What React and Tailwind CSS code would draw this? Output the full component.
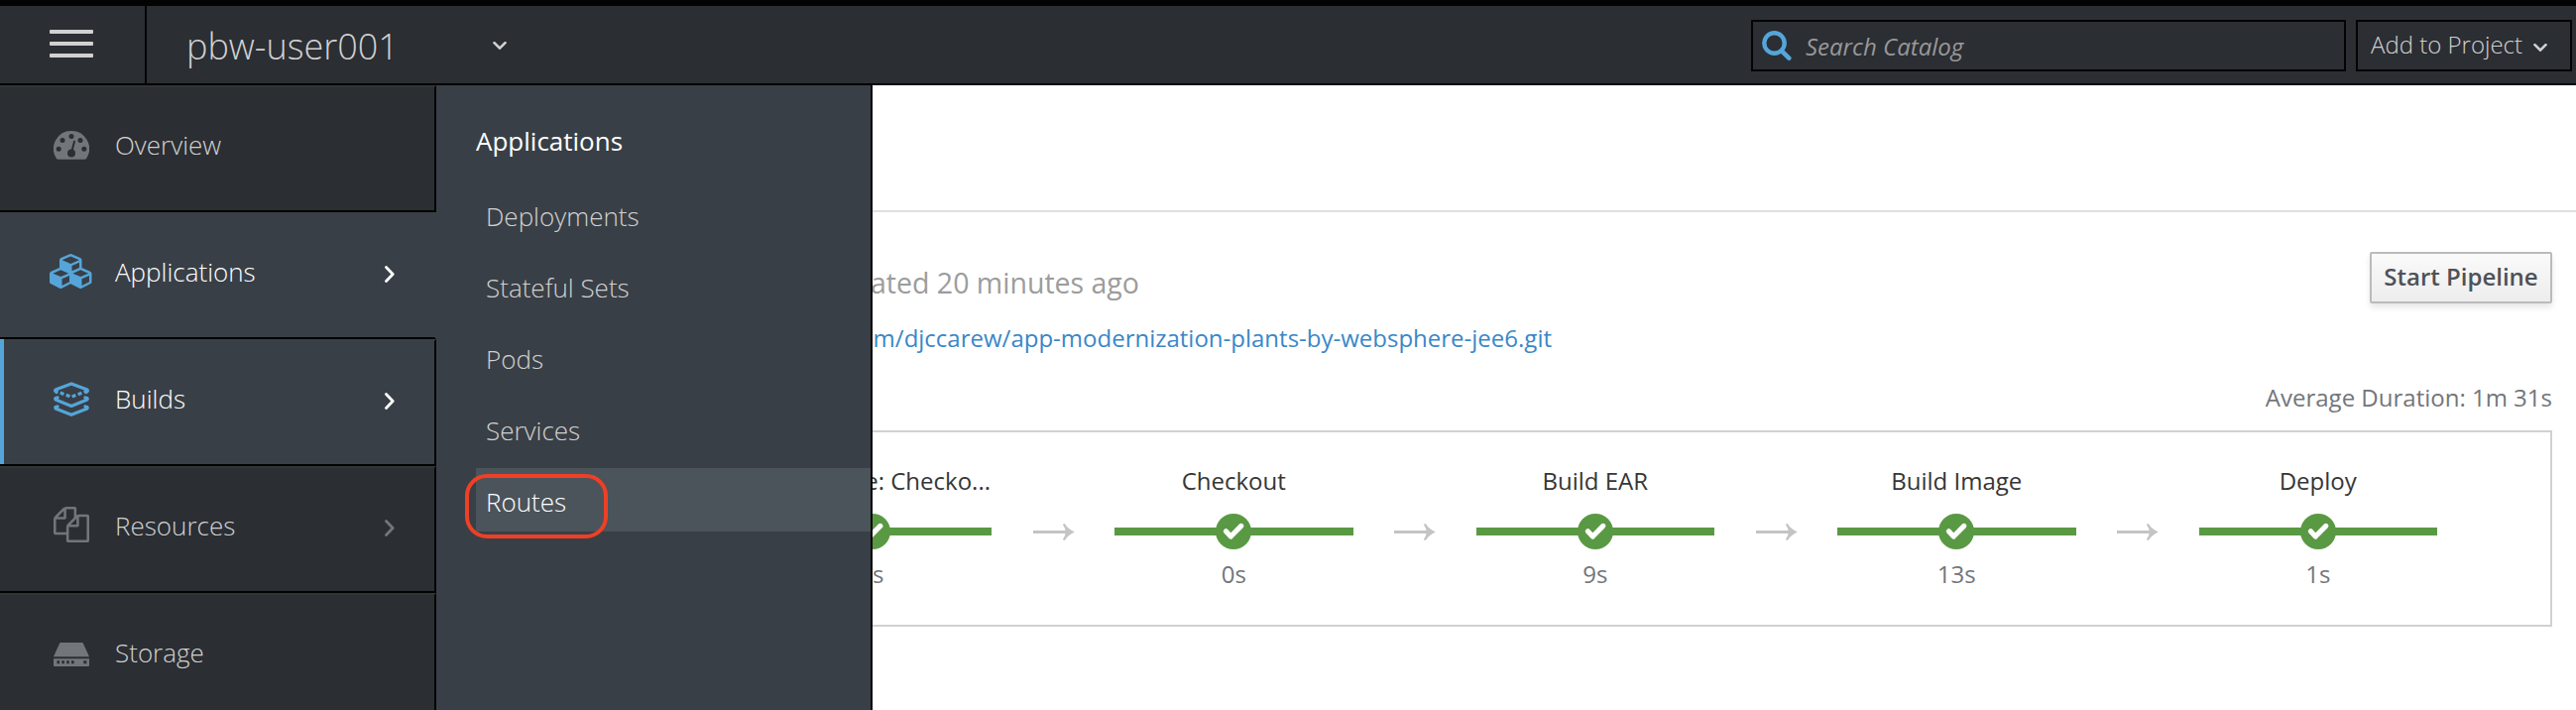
const Chevron = ({ className, d, box = "0 0 14 8", sw = 2.6 }) => (
  <svg viewBox={box} className={className} fill="none" stroke="currentColor" strokeWidth={sw} strokeLinecap="round" strokeLinejoin="round">
    <path d={d} />
  </svg>
);
const ChevronDown = ({ className }) => <Chevron className={className} d="M1.5 1.2 7 6.7l5.5-5.5" />;
const ChevronRight = ({ className }) => <Chevron className={className} box="0 0 10 17" d="M1.5 1.5 8.2 8.5 1.5 15.5" sw={2.8} />;

const Gauge = () => (
  <svg viewBox="0 0 36 29" className="h-[29px] w-9">
    <mask id="gauge-cut">
      <rect width="36" height="29" fill="#fff" />
      <g fill="#000">
        <circle cx="5.2" cy="18.3" r="2.5" />
        <circle cx="9" cy="9.4" r="2.5" />
        <circle cx="18" cy="5.6" r="2.5" />
        <circle cx="27" cy="9.4" r="2.5" />
        <circle cx="30.8" cy="18.3" r="2.5" />
        <circle cx="18" cy="22.5" r="4" />
      </g>
      <path d="M18.3 21 21 10.8" stroke="#000" strokeWidth="2" strokeLinecap="round" />
    </mask>
    <path mask="url(#gauge-cut)" fill="currentColor" d="M18 0a18 18 0 0 1 15.2 27.7q-.8 1.1-1.8 1.1H4.6q-1 0-1.8-1.1A18 18 0 0 1 18 0z" />
  </svg>
);
const Cubes = () => (
  <svg viewBox="0 0 2304 1792" className="h-[35px] w-[45px]" fill="currentColor">
    <path d="M640 1632l384-192v-314l-384 164v342zm-64-454l404-173-404-173-404 173zm1088 454l384-192v-314l-384 164v342zm-64-454l404-173-404-173-404 173zm-448-293l384-165v-266l-384 164v267zm-64-379l441-189-441-189-441 189zm1088 518v416q0 36-19 67t-52 47l-448 224q-25 14-57 14t-57-14l-448-224q-4-2-7-4-2 2-7 4l-448 224q-25 14-57 14t-57-14l-448-224q-33-16-52-47t-19-67v-416q0-38 21.500-70t56.500-48l434-186v-400q0-38 21.500-70t56.500-48l448-192q23-10 50-10t50 10l448 192q35 16 56.500 48t21.500 70v400l434 186q36 16 57 48t21 70z" />
  </svg>
);
const Layers = () => (
  <svg viewBox="0 0 36 35" className="h-[35px] w-9" fill="none" stroke="currentColor" strokeWidth="3.2" strokeLinejoin="round" strokeLinecap="round">
    <path d="M3 10.500 1.700 9.300q-.3-1 .9-1.500L18 1.900l15.400 5.900q1.200.5.900 1.500L33 10.500" />
    <path strokeLinecap="butt" strokeDasharray="4 2.400" strokeDashoffset="-4" d="M3 9.500 18 15.300 33 9.500" />
    <path d="M4 16l-2 .6q-.6 1.100.6 1.700L18 24.500l15.400-6.200q1.200-.6.6-1.700l-2-.6" />
    <path d="M4 25l-2 .6q-.6 1.100.6 1.700L18 33.300l15.400-6q1.200-.6.6-1.700l-2-.6" />
  </svg>
);
const Files = () => (
  <svg viewBox="0 0 1792 1792" className="size-9" fill="currentColor">
    <path d="M1696 384q40 0 68 28t28 68v1216q0 40-28 68t-68 28h-960q-40 0-68-28t-28-68v-288h-544q-40 0-68-28t-28-68v-672q0-40 20-88t48-76l408-408q28-28 76-48t88-20h416q40 0 68 28t28 68v328q68-40 128-40h416zm-544 213l-299 299h299v-299zm-640-384l-299 299h299v-299zm196 647l316-316v-416h-384v416q0 40-28 68t-68 28h-416v640h512v-256q0-40 20-88t48-76zm956 804v-1152h-384v416q0 40-28 68t-68 28h-416v640h896z" />
  </svg>
);
const Drive = () => (
  <svg viewBox="0 0 36 24" className="h-6 w-9">
    <path fill="currentColor" d="M7.300 0h21.400q.9 0 1.300.9L36 14.200H0L6 .9Q6.400 0 7.300 0z" />
    <path fill="currentColor" fillRule="evenodd" d="M0 16.200h36V23q0 1-1 1H1q-1 0-1-1zM3.500 18.300v3h2.600v-3zM8.300 18.300v3h2.600v-3zM13.200 18.300v3h2.600v-3zM18 18.300v3h2.600v-3zM30.300 18.300v3h3v-3z" />
  </svg>
);
const SearchIcon = () => (
  <svg viewBox="0 0 30 30" className="size-[30px] text-[#55a5da]" fill="none" stroke="currentColor">
    <circle cx="12.500" cy="12.500" r="10.200" strokeWidth="4.400" />
    <path d="M20 20.500 27.300 27.600" strokeWidth="4.600" strokeLinecap="round" />
  </svg>
);
const Arrow = () => (
  <svg viewBox="0 0 42 18" className="mt-[75px] ml-px h-[18px] w-[42px] shrink-0" fill="#c4c4c4">
    <path d="M0 7h37v3H0z" />
    <path d="M31.800 0Q35 5.500 41.800 8.500 35 11.500 31.800 17L29.800 16.200Q32.500 12 33 8.500 32.500 5 29.800.8z" />
  </svg>
);

const nav = [
  { label: "Overview", icon: <Gauge />, row: "bg-[#2b2e33] border-r-2 border-t-2 border-t-[#303537]", iconPad: "pt-[1px]", color: "text-[#d1d1d1]", tint: "text-[#72767b]" },
  { label: "Applications", icon: <Cubes />, row: "bg-[#393f46] border-r-2 border-t-2 border-t-[#393f46] border-r-[#393f46]", iconPad: "pb-0.5", color: "text-white", tint: "text-[#55a5da]", arrow: "text-white" },
  { label: "Builds", icon: <Layers />, row: "bg-[#393f46] border-r-2 border-t-2 border-t-[#393f46]", iconPad: "", color: "text-white", tint: "text-[#55a5da]", arrow: "text-white", active: true },
  { label: "Resources", icon: <Files />, row: "bg-[#2b2e33] border-r-2 border-t-2 border-t-[#303537]", iconPad: "pb-0.5", color: "text-[#d1d1d1]", tint: "text-[#72767b]", arrow: "text-[#72767b]" },
  { label: "Storage", icon: <Drive />, row: "bg-[#2b2e33] border-r-2 border-t-2 border-t-[#303537]", iconPad: "pt-1", color: "text-[#d1d1d1]", tint: "text-[#72767b]" },
];

const menu = ["Deployments", "Stateful Sets", "Pods", "Services", "Routes"];

const stages = [
  ["e: Checko...", "s"],
  ["Checkout", "0s"],
  ["Build EAR", "9s"],
  ["Build Image", "13s"],
  ["Deploy", "1s"],
];

const Stage = ({ name, time, first }) => (
  <div className="flex w-[240.500px] shrink-0 flex-col items-center">
    <div className={first ? "w-full pr-px text-right text-2xl leading-8 text-[#363636]" : "text-2xl leading-8 text-[#363636]"}>{name}</div>
    <div className="mt-[17px] flex h-9 w-full items-center">
      <div className="h-2 flex-1 bg-[#5a9943]" />
      <svg viewBox="0 0 36 36" className="-mx-px size-9 shrink-0">
        <circle cx="18" cy="18" r="18" fill="#5a9943" />
        <path d="M10.400 17.800 15.300 23 25.800 12.400" fill="none" stroke="#fff" strokeWidth="5.200" strokeLinejoin="round" strokeLinecap="round" />
      </svg>
      <div className="h-2 flex-1 bg-[#5a9943]" />
    </div>
    <div className={first ? "mt-[9px] pl-3 text-2xl leading-8 text-[#72767b]" : "mt-[9px] text-2xl leading-8 text-[#72767b]"}>{time}</div>
  </div>
);

export default function App() {
  return (
    <div className="flex h-[716px] w-[2598px] flex-col overflow-hidden bg-white font-['Open_Sans',sans-serif]">
      <header className="flex h-[86px] shrink-0 items-stretch border-t-[6px] border-b-2 border-[#030303] bg-[#2b2e33] text-[#d1d1d1]">
        <button className="flex w-[148px] shrink-0 flex-col gap-2 border-r-2 border-[#030303] pt-6 pl-[50px]">
          <span className="h-1 w-11 rounded-[1px] bg-[#d1d1d1]" />
          <span className="h-1 w-11 rounded-[1px] bg-[#d1d1d1]" />
          <span className="h-1 w-11 rounded-[1px] bg-[#d1d1d1]" />
        </button>
        <div className="flex w-[363px] shrink-0 justify-between pl-[40px]">
          <span className="pt-[17px] text-[36px] leading-[48px] font-[330]">pbw-user001</span>
          <ChevronDown className="mt-9 h-2 w-3.5" />
        </div>
        <div className="flex flex-1 justify-end gap-[10px] pt-[14px] pr-1">
          <div className="flex h-[52px] w-[600px] border-2 border-[#030303] pt-[9px] pl-[9px]">
            <SearchIcon />
            <span className="ml-[14px] text-2xl leading-8 text-[#989898] italic">Search Catalog</span>
          </div>
          <button className="flex h-[52px] w-[218px] border-2 border-[#030303] pt-[7px] pl-[13px]">
            <span className="text-2xl leading-8 font-[330]">Add to Project</span>
            <ChevronDown className="mt-[15px] ml-[11px] h-2 w-3.5" />
          </button>
        </div>
      </header>

      <div className="flex min-h-0 flex-1">
        <nav className="flex w-[440px] shrink-0 flex-col bg-[#393f46]">
          {nav.map((n) => (
            <div key={n.label} className={`flex h-32 shrink-0 border-b-2 border-b-[#030303] ${n.label === "Applications" ? "" : "border-r-[#030303]"} ${n.row}`}>
              <div className={n.active ? "-mt-0.5 w-1 bg-[#55a5da]" : "w-1"} />
              <div className={`mt-[35px] flex h-[46px] w-[136px] items-center justify-center ${n.iconPad} ${n.tint}`}>{n.icon}</div>
              <span className={`-ml-6 pt-[36px] text-[26px] leading-[44px] font-[330] ${n.color}`}>{n.label}</span>
              {n.arrow && <ChevronRight className={`mt-[52px] mr-10 ml-auto h-[17px] w-2.5 ${n.arrow}`} />}
            </div>
          ))}
        </nav>

        <aside className="w-[440px] shrink-0 border-r-2 border-[#030303] bg-[#393f46] pl-10">
          <h2 className="pt-[36px] text-[26px] leading-[40px] text-white">Applications</h2>
          <ul className="mt-[22px] flex flex-col gap-2">
            {menu.map((m) => (
              <li
                key={m}
                className={
                  m === "Routes"
                    ? "relative h-16 bg-[#4b535b] pl-2.5 text-[26px] leading-[68px] font-[330] text-white"
                    : "h-16 pl-2.5 text-[26px] leading-[68px] font-[330] text-[#d1d1d1]"
                }
              >
                {m}
                {m === "Routes" && <span className="absolute top-1.5 -left-[11px] h-[65px] w-36 rounded-[22px] border-4 border-[#ee4026]" />}
              </li>
            ))}
          </ul>
        </aside>

        <main className="flex min-w-0 flex-1 flex-col overflow-hidden">
          <div className="h-32 shrink-0 border-b-2 border-[#e0e0e0]" />
          <div className="flex pr-6">
            <div className="flex flex-1 flex-col items-start">
              <div className="mt-[51px] flex w-[269px] justify-end text-[28.500px] leading-[40px] whitespace-nowrap text-[#9c9c9c]">ated 20 minutes ago</div>
              <div className="mt-[20px] flex w-[685px] justify-end text-2xl leading-8 whitespace-nowrap text-[#3a87c8]">m/djccarew/app-modernization-plants-by-websphere-jee6.git</div>
            </div>
            <div className="flex flex-col items-end">
              <button className="mt-10 h-[52px] w-[184px] rounded-[2px] border-2 border-[#bbb] bg-linear-to-b from-[#fafafa] to-[#ededed] text-2xl leading-[46px] font-semibold whitespace-nowrap text-[#4d5258] shadow-[0_4px_6px_rgba(3,3,3,0.1)]"><span className="-mt-0.5 block">Start Pipeline</span></button>
              <div className="mt-[79px] text-2xl leading-8 text-[#72767b]">Average Duration: 1m 31s</div>
            </div>
          </div>
          <div className="mt-[17px] mr-6 flex h-[198px] justify-end overflow-hidden border-2 border-l-0 border-[#d1d1d1] pt-[33px] pr-[114px]">
            {stages.map(([name, time], i) => (
              <div key={name} className="flex shrink-0">
                {i > 0 && (
                  <div className="-mt-[16px] flex w-[124px] shrink-0 justify-center">
                    <Arrow />
                  </div>
                )}
                <Stage name={name} time={time} first={i === 0} />
              </div>
            ))}
          </div>
        </main>
      </div>
    </div>
  );
}
